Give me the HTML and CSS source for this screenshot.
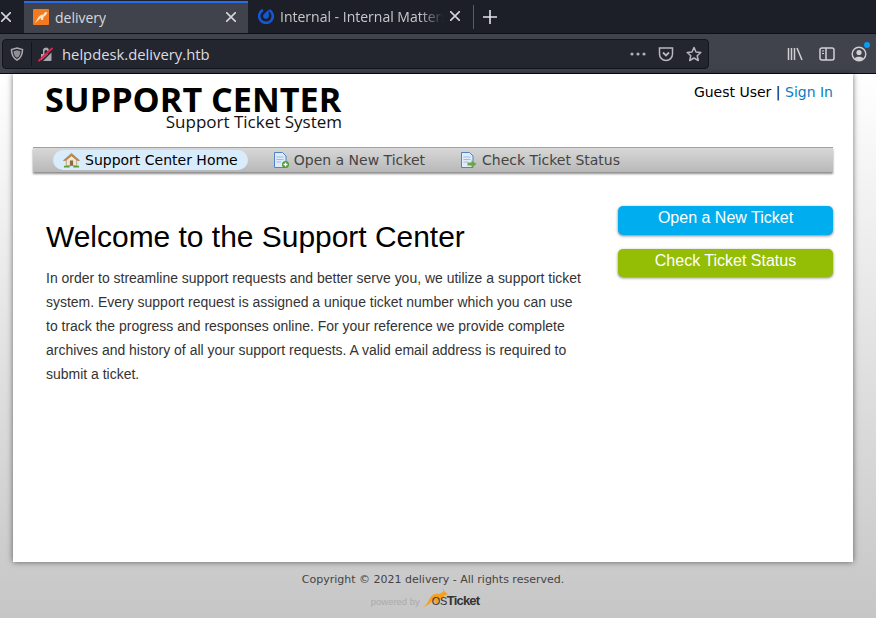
FILE: index.html
```html
<!DOCTYPE html>
<html lang="en">

<head>
    <meta charset="utf-8" />
    <title>delivery</title>
    <link rel="stylesheet" href="styles.css">
</head>

<body>
    <div class="browser">
        <div class="tabstrip">
            <div class="tab tab-stub">
                <svg class="tab-close" viewBox="0 0 10 10"><path d="M0 0L10 10M10 0L0 10" /></svg>
            </div>
            <div class="tab tab-active">
                <svg class="favicon" viewBox="0 0 16 16">
                    <rect width="16" height="16" rx="1" fill="#f47a20" />
                    <path d="M1.500 14C3 13 4 10 5.500 8C7 6 9 5.500 10.500 5.500L12 3L14.500 3.500L13 6L10.500 8L10 11L8 11L8 9C6 10 4 13 1.500 14Z" fill="#fde6d0" />
                </svg>
                <span class="tab-title">delivery</span>
                <svg class="tab-close" viewBox="0 0 10 10"><path d="M0 0L10 10M10 0L0 10" /></svg>
            </div>
            <div class="tab tab-other">
                <svg class="favicon" viewBox="0 0 16 16">
                    <path d="M5 2A6.800 6.800 0 1 0 11.200 2.100" fill="none" stroke="#1558d6" stroke-width="2.600" />
                    <path d="M10.600 1.800L10.900 8A2.900 2.900 0 1 1 6.600 5.400Z" fill="#1558d6" />
                </svg>
                <span class="tab-title tab-title-fade">Internal - Internal Matters</span>
                <svg class="tab-close" viewBox="0 0 10 10"><path d="M0 0L10 10M10 0L0 10" /></svg>
            </div>
            <div class="tab-sep"></div>
            <svg class="new-tab" viewBox="0 0 14 14"><path d="M7 0V14M0 7H14" /></svg>
        </div>
        <div class="navbar">
            <div class="urlbar">
                <svg class="shield" viewBox="0 0 14 14">
                    <path d="M7 1L12.500 2.500C12.500 7.500 11 11 7 13C3 11 1.500 7.500 1.500 2.500Z" fill="none" stroke="#a8a8ac" stroke-width="1.600" />
                    <path d="M7 3.200L10.500 4.200C10.500 7 9.500 9.500 7 10.800C4.500 9.500 3.500 7 3.500 4.200Z" fill="#8e8e92" />
                </svg>
                <div class="url-sep"></div>
                <svg class="lock" viewBox="0 0 16 16">
                    <path d="M5 8V5.500A3 3 0 0 1 11 4L9.500 5.500A1.500 1.500 0 0 0 6.500 5.500V8Z" fill="#a8a8ac" />
                    <path d="M3 8H10L3 14.500ZM13.500 6.500V14A1 1 0 0 1 12.500 15H5Z" fill="#a8a8ac" />
                    <path d="M.500 15L14.500 2" stroke="#e0244e" stroke-width="1.800" />
                </svg>
                <span class="url-text">helpdesk.delivery.htb</span>
                <div class="url-actions">
                    <svg class="url-dots" viewBox="0 0 16 4">
                        <circle cx="2" cy="2" r="1.600" /><circle cx="8" cy="2" r="1.600" /><circle cx="14" cy="2" r="1.600" />
                    </svg>
                    <svg class="url-icon" viewBox="0 0 16 16">
                        <path d="M1.500 2H14.500V8A6.500 6.500 0 0 1 1.500 8Z" fill="none" stroke="#b8b8bc" stroke-width="1.500" />
                        <path d="M5 6.500L8 9.500L11 6.500" fill="none" stroke="#b8b8bc" stroke-width="1.800" />
                    </svg>
                    <svg class="url-icon" viewBox="0 0 16 16">
                        <path d="M8 1.500L10 6L14.800 6.500L11.200 9.700L12.300 14.500L8 12L3.700 14.500L4.800 9.700L1.200 6.500L6 6Z" fill="none" stroke="#b8b8bc" stroke-width="1.500" stroke-linejoin="round" />
                    </svg>
                </div>
            </div>
            <div class="nav-tools">
                <svg class="tool-icon" viewBox="0 0 16 16">
                    <path d="M1.500 2V14M4.500 2V14M7.500 2V14M10 2L15 14" fill="none" stroke="#d0d0d4" stroke-width="1.500" />
                </svg>
                <svg class="tool-icon" viewBox="0 0 16 16">
                    <rect x="1" y="2" width="14" height="12" rx="2" fill="none" stroke="#d0d0d4" stroke-width="1.500" />
                    <path d="M7 2V14" stroke="#d0d0d4" stroke-width="1.500" />
                    <path d="M3 5H5M3 7.500H5" stroke="#d0d0d4" stroke-width="1" />
                </svg>
                <div class="account">
                    <svg class="tool-icon" viewBox="0 0 16 16">
                        <circle cx="8" cy="8" r="6.800" fill="none" stroke="#d0d0d4" stroke-width="1.400" />
                        <circle cx="8" cy="6.500" r="2.600" fill="#d0d0d4" />
                        <path d="M3.500 12.500C5 10 11 10 12.500 12.500C11 14.500 5 14.500 3.500 12.500Z" fill="#d0d0d4" />
                    </svg>
                    <span class="account-dot"></span>
                </div>
            </div>
        </div>
    </div>

    <div class="viewport">
        <div class="container">
            <div class="header">
                <div class="logo">
                    <div class="logo-title">SUPPORT CENTER</div>
                    <div class="logo-sub">Support Ticket System</div>
                </div>
                <div class="user-info">Guest User | <a href="#">Sign In</a></div>
            </div>
            <ul class="nav">
                <li class="nav-item nav-item-active">
                    <svg class="nav-icon" viewBox="0 0 18 16">
                        <path d="M3.500 8V14H14.500V8L9 3Z" fill="#f1e6d2" stroke="#b9a27e" />
                        <path d="M.500 8.500L9 1L17.500 8.500L15.500 8.500L9 3.500L2.500 8.500Z" fill="#c08a4e" stroke="#a86c30" stroke-width=".6" />
                        <rect x="7.300" y="8.500" width="3.400" height="5.500" fill="#8c6a44" />
                        <path d="M1 15H7M11 15H17" stroke="#5f9e35" stroke-width="2" />
                    </svg>
                    Support Center Home
                </li>
                <li class="nav-item">
                    <svg class="nav-icon" viewBox="0 0 17 16">
                        <path d="M1.500 .5H9.500L13 4V15.500H1.500Z" fill="#dfeafa" stroke="#4f83c4" />
                        <path d="M3.500 5H10.500M3.500 7.500H10.500M3.500 10H8" stroke="#a2bcdc" />
                        <circle cx="12.500" cy="12.500" r="3.500" fill="#4f9a33" />
                        <path d="M12.500 10.500V14.500M10.500 12.500H14.500" stroke="#fff" stroke-width="1.300" />
                    </svg>
                    Open a New Ticket
                </li>
                <li class="nav-item">
                    <svg class="nav-icon" viewBox="0 0 17 16">
                        <path d="M1.500 .5H9.500L13 4V15.500H1.500Z" fill="#dfeafa" stroke="#4f83c4" />
                        <path d="M3.500 5H10.500M3.500 7.500H10.500M3.500 10H8" stroke="#a2bcdc" />
                        <path d="M7.500 10.500H11.500V8.500L16.500 12L11.500 15.500V13.500H7.500Z" fill="#6aa83f" />
                    </svg>
                    Check Ticket Status
                </li>
            </ul>
            <div class="content">
                <div class="intro">
                    <h1>Welcome to the Support Center</h1>
                    <p>In order to streamline support requests and better serve you, we utilize a support ticket
                        system. Every support request is assigned a unique ticket number which you can use
                        to track the progress and responses online. For your reference we provide complete
                        archives and history of all your support requests. A valid email address is required to
                        submit a ticket.</p>
                </div>
                <div class="sidebar">
                    <a href="#" class="button button-blue">Open a New Ticket</a>
                    <a href="#" class="button button-green">Check Ticket Status</a>
                </div>
            </div>
        </div>
        <div class="footer">
            <p>Copyright © 2021 delivery - All rights reserved.</p>
            <div class="powered">
                <span class="powered-by">powered by</span>
                <svg class="roo" viewBox="0 0 26 20">
                    <path d="M0 19C3 18 5 14 7 10C9 6 13 5 16 6L20 4L20 0L21 3L25 6L21 8L19 12L16 11L15 15L18 16L13 16L11 12C8 14 5 18 0 19Z" fill="#f5a01f" />
                </svg>
                <span class="powered-os">OS</span><span class="powered-ticket">Ticket</span>
            </div>
        </div>
    </div>
</body>

</html>
```

FILE: styles.css
```css
* {
    box-sizing: border-box;
}

html,
body {
    margin: 0;
    height: 618px;
    overflow: hidden;
}

body {
    display: flex;
    flex-direction: column;
    background: #fff;
}

/* browser chrome */
.browser {
    height: 74px;
    flex-shrink: 0;
    font-family: "Open Sans", "Noto Sans", sans-serif;
    color: #d8d8dc;
    border-bottom: 1px solid #0c0c10;
}

.tabstrip {
    height: 33px;
    display: flex;
    align-items: center;
    background: #1d1f28;
}

.tab {
    height: 33px;
    display: flex;
    align-items: center;
    font-size: 14px;
}

.tab-stub {
    width: 24px;
    padding-left: 1px;
}

.tab-close {
    width: 10px;
    height: 10px;
    flex-shrink: 0;
    margin-left: auto;
}

.tab-stub .tab-close {
    margin-left: 0;
}

.tab-close path {
    stroke: #d4d4d8;
    stroke-width: 1.6;
    fill: none;
}

.tab-active {
    width: 224px;
    height: 32px;
    margin-top: 1px;
    padding: 0 12px 2px 9px;
    background: #40434c;
    border-top: 2px solid #2a6ce8;
}

.tab-other {
    width: 225px;
    padding: 0 13px 1px 10px;
    color: #c8c8cc;
}

.favicon {
    width: 16px;
    height: 16px;
    flex-shrink: 0;
    margin-right: 6px;
}

.tab-title {
    white-space: nowrap;
    overflow: hidden;
    font-size: 14px;
}

.tab-title-fade {
    width: 164px;
    -webkit-mask-image: linear-gradient(to right, #000 85%, transparent);
    mask-image: linear-gradient(to right, #000 85%, transparent);
}

.tab-sep {
    width: 1px;
    height: 24px;
    background: #5a5c64;
    margin-right: 9px;
}

.new-tab {
    width: 14px;
    height: 14px;
}

.new-tab path {
    stroke: #e4e4e8;
    stroke-width: 1.6;
    fill: none;
}

.navbar {
    height: 40px;
    display: flex;
    align-items: center;
    padding: 0 9px 0 2px;
    background: #40434c;
    border-top: 1px solid #0f1015;
}

.urlbar {
    width: 707px;
    height: 30px;
    display: flex;
    align-items: center;
    padding: 0 6px 0 7px;
    background: #23252f;
    border: 1px solid #14151a;
    border-radius: 4px;
}

.shield {
    width: 14px;
    height: 14px;
}

.url-sep {
    width: 1px;
    height: 24px;
    background: #14151a;
    margin: 0 7px;
}

.lock {
    width: 16px;
    height: 16px;
    margin-right: 7px;
    margin-left: -1px;
}

.url-text {
    font-size: 14.800px;
    color: #dcdce0;
    margin-left: 1px;
}

.url-actions {
    margin-left: auto;
    display: flex;
    align-items: center;
    gap: 12px;
}

.url-dots {
    width: 16px;
    height: 4px;
    fill: #b0b0b4;
}

.url-icon {
    width: 16px;
    height: 16px;
}

.nav-tools {
    margin-left: auto;
    display: flex;
    align-items: center;
    gap: 16px;
}

.tool-icon {
    display: block;
    width: 16px;
    height: 16px;
}

.account {
    position: relative;
}

.account-dot {
    position: absolute;
    top: -4px;
    right: -3px;
    width: 6px;
    height: 6px;
    border-radius: 50%;
    background: #0a9bf5;
}

/* page */
.viewport {
    flex: 1;
    min-height: 0;
    background: linear-gradient(#fff, #c6c6c6);
    font-family: "DejaVu Sans", sans-serif;
}

.container {
    width: 840px;
    height: 488px;
    margin-left: 13px;
    padding: 0 20px;
    background: #fff;
    box-shadow: 0 0 6px rgba(0, 0, 0, .55);
}

.header {
    height: 73px;
    display: flex;
    justify-content: space-between;
}

.logo {
    width: 297px;
    margin-left: 12px;
    padding-top: 9px;
}

.logo-title {
    font-family: "Open Sans", sans-serif;
    font-weight: 700;
    font-size: 34.200px;
    line-height: 32px;
    color: #000;
    white-space: nowrap;
}

.logo-sub {
    font-family: "Open Sans", sans-serif;
    font-size: 17px;
    line-height: 14px;
    margin-top: 0;
    text-align: right;
    white-space: nowrap;
    color: #111;
}

.user-info {
    font-size: 14px;
    line-height: 18px;
    padding-top: 9px;
    color: #000;
}

.user-info a {
    color: #0a7cc4;
    text-decoration: none;
}

.nav {
    list-style: none;
    margin: 0 0 1px;
    height: 25px;
    padding: 0 0 0 20px;
    display: flex;
    align-items: center;
    gap: 15px;
    background: linear-gradient(#d8d8d8, #b8b8b8);
    border-top: 1px solid #a0a0a0;
    box-shadow: 0 2px 2px rgba(0, 0, 0, .45);
}

.nav-item {
    height: 20px;
    display: flex;
    align-items: center;
    gap: 4px;
    padding: 0 10px;
    font-size: 14px;
    color: #444;
    white-space: nowrap;
}

.nav-item:last-child {
    gap: 5px;
}

.nav-item-active {
    border-radius: 10px;
    background: #d8ecfb;
    color: #000;
    gap: 5px;
}

.nav-icon {
    width: 17px;
    height: 16px;
}

.content {
    display: flex;
    justify-content: space-between;
    padding: 33px 0 0 13px;
}

.intro {
    width: 540px;
    padding-top: 13px;
}

h1 {
    margin: 0;
    font-family: "Liberation Sans", Arial, sans-serif;
    font-weight: 400;
    font-size: 29.950px;
    line-height: 36px;
    color: #000;
}

.intro p {
    margin: 11px 0 0;
    font-family: "Liberation Sans", Arial, sans-serif;
    font-size: 13.970px;
    line-height: 24px;
    color: #333;
}

.sidebar {
    width: 215px;
    display: flex;
    flex-direction: column;
    gap: 14px;
}

.button {
    height: 29px;
    display: block;
    border-radius: 5px;
    font-family: "Liberation Sans", Arial, sans-serif;
    font-size: 16px;
    line-height: 23px;
    text-align: center;
    color: #fff;
    text-decoration: none;
    box-shadow: 0 1px 3px rgba(0, 0, 0, .5);
}

.button-blue {
    background: #00aeef;
}

.button-green {
    height: 28px;
    line-height: 24px;
    background: #94bd05;
}

.footer {
    width: 840px;
    margin-left: 13px;
    padding-top: 11px;
    text-align: center;
    color: #444;
}

.footer p {
    margin: 0;
    font-size: 11px;
    line-height: 14px;
}

.powered {
    display: flex;
    justify-content: center;
    align-items: flex-end;
    height: 22px;
    padding-right: 16px;
}

.powered-by {
    font-family: "Liberation Sans", sans-serif;
    font-size: 9.500px;
    line-height: 15px;
    color: #aaa;
    margin-right: 3px;
}

.roo {
    width: 26px;
    height: 20px;
    margin: 0 -17px 1px 0;
}

.powered-os,
.powered-ticket {
    font-family: "Liberation Sans", sans-serif;
    font-size: 13px;
    line-height: 16px;
    letter-spacing: -.8px;
    color: #333;
    font-weight: 700;
}

.powered-os {
    font-weight: 400;
    font-size: 11px;
    line-height: 15px;
    letter-spacing: -.5px;
}
```
